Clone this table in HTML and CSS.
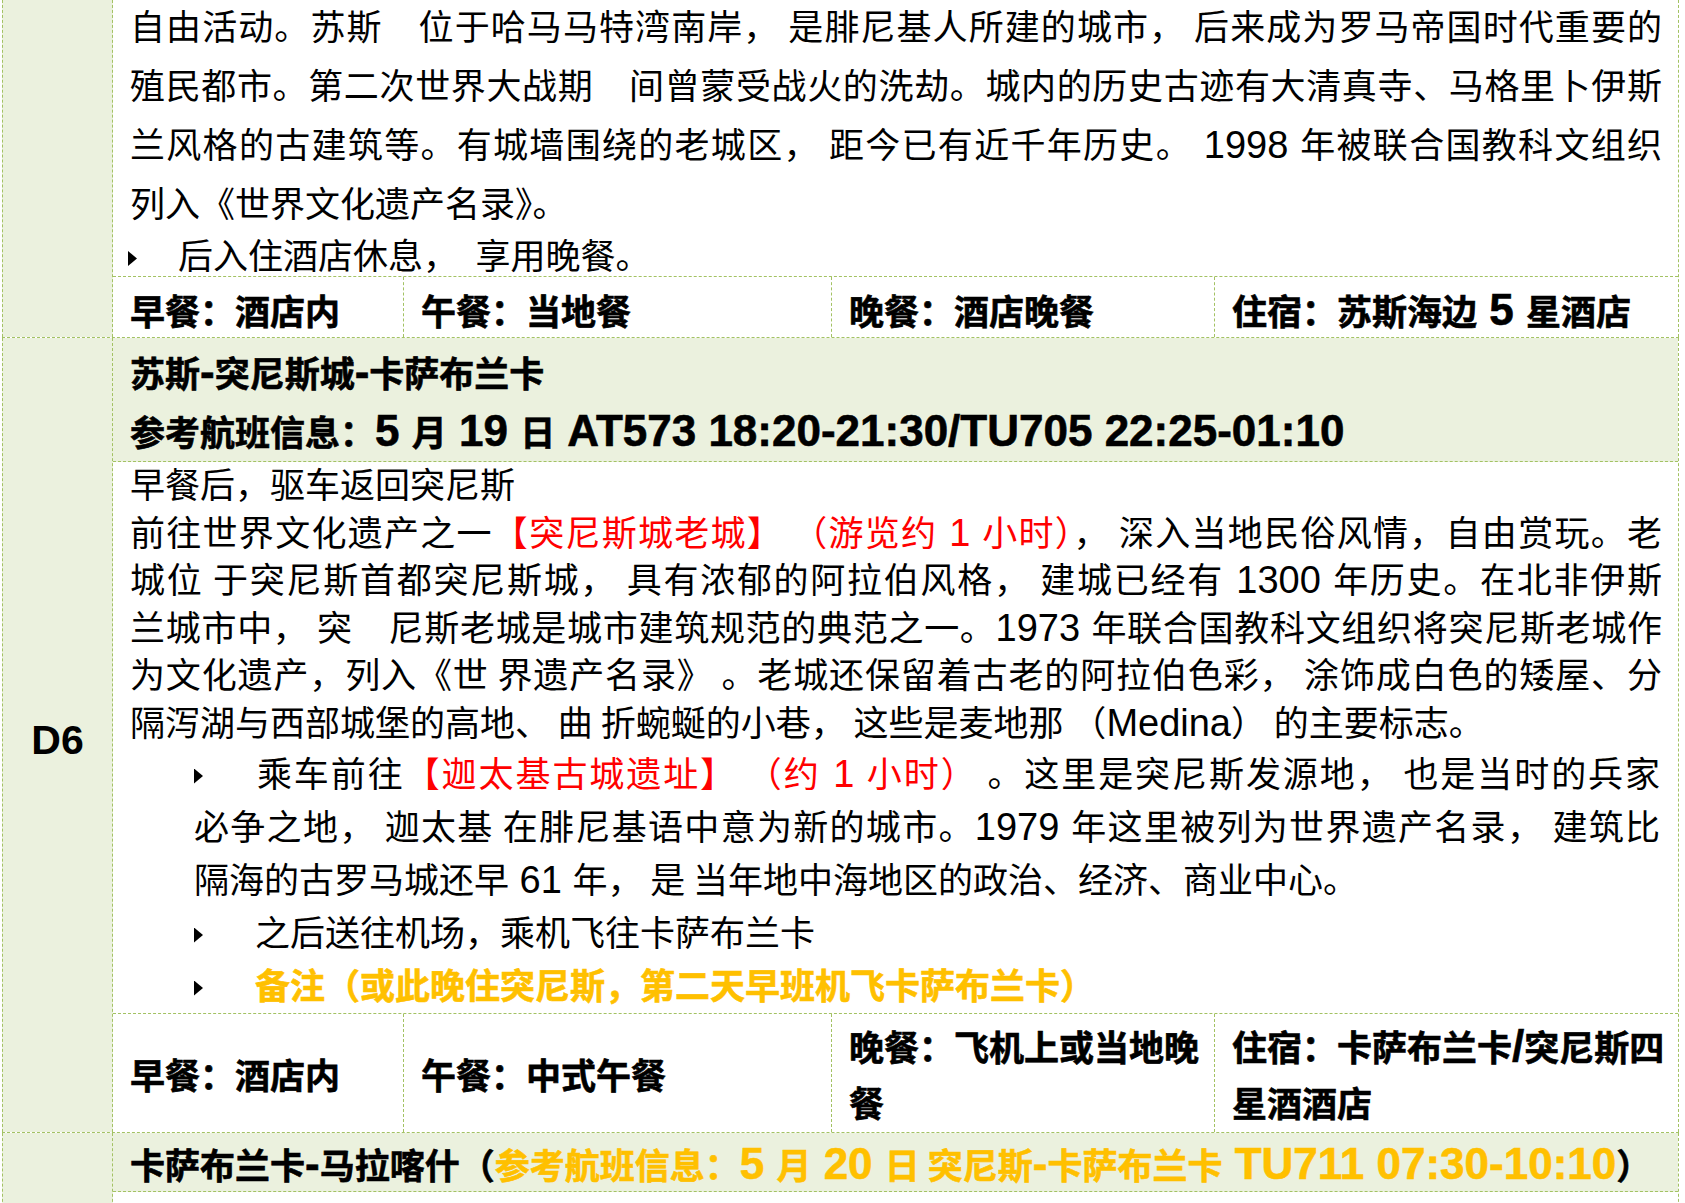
FILE: index.html
```html
<!DOCTYPE html>
<html lang="zh-CN">
<head>
<meta charset="utf-8">
<title>行程</title>
<link rel="stylesheet" href="styles.css">
</head>
<body>
<div class="sheet">
  <div class="row first">
    <div class="day"></div>
    <div class="content">
      <div class="para top">
        <span class="ln">自由活动。苏斯　位于哈马马特湾南岸， 是腓尼基人所建的城市， 后来成为罗马帝国时代重要的</span>
        <span class="ln">殖民都市。第二次世界大战期　间曾蒙受战火的洗劫。城内的历史古迹有大清真寺、马格里卜伊斯</span>
        <span class="ln">兰风格的古建筑等。有城墙围绕的老城区， 距今已有近千年历史。<span class="la"> 1998 </span>年被联合国教科文组织</span>
        <span class="ln end">列入《世界文化遗产名录》。</span>
      </div>
      <div class="bul top-bul"><span class="tri"></span>后入住酒店休息，&ensp;享用晚餐。</div>
      <div class="meals short">
        <div class="cell"><span>早餐：酒店内</span></div>
        <div class="cell"><span>午餐：当地餐</span></div>
        <div class="cell"><span>晚餐：酒店晚餐</span></div>
        <div class="cell"><span>住宿：苏斯海边<span class="la"> 5 </span>星酒店</span></div>
      </div>
    </div>
  </div>

  <div class="row">
    <div class="day"><span class="day-label">D6</span></div>
    <div class="content">
      <div class="head">
        <div>苏斯<span class="la">-</span>突尼斯城<span class="la">-</span>卡萨布兰卡</div>
        <div>参考航班信息：<span class="la">5 </span>月<span class="la"> 19 </span>日<span class="la"> AT573 18:20-21:30/TU705 22:25-01:10</span></div>
      </div>
      <div class="para body">
        <span class="ln end">早餐后，驱车返回突尼斯</span>
        <span class="ln">前往世界文化遗产之一<span class="red">【突尼斯城老城】 （游览约<span class="la"> 1 </span>小时）</span>， 深入当地民俗风情，自由赏玩。老</span>
        <span class="ln">城位 于突尼斯首都突尼斯城， 具有浓郁的阿拉伯风格， 建城已经有<span class="la"> 1300 </span>年历史。在北非伊斯</span>
        <span class="ln">兰城市中， 突　尼斯老城是城市建筑规范的典范之一。<span class="la">1973 </span>年联合国教科文组织将突尼斯老城作</span>
        <span class="ln">为文化遗产，列入《世 界遗产名录》 。老城还保留着古老的阿拉伯色彩， 涂饰成白色的矮屋、分</span>
        <span class="ln end">隔泻湖与西部城堡的高地、 曲 折蜿蜒的小巷， 这些是麦地那 （<span class="la">Medina</span>） 的主要标志。</span>
      </div>
      <div class="subs">
        <div class="sub">
          <span class="ln"><span class="tri"></span>乘车前往<span class="red">【迦太基古城遗址】 （约<span class="la"> 1 </span>小时）</span> 。这里是突尼斯发源地， 也是当时的兵家</span>
          <span class="ln">必争之地， 迦太基 在腓尼基语中意为新的城市。<span class="la">1979 </span>年这里被列为世界遗产名录， 建筑比</span>
          <span class="ln end">隔海的古罗马城还早<span class="la"> 61 </span>年， 是 当年地中海地区的政治、经济、商业中心。</span>
        </div>
        <div class="sub"><span class="tri"></span>之后送往机场，乘机飞往卡萨布兰卡</div>
        <div class="sub note"><span class="tri"></span>备注（或此晚住突尼斯，第二天早班机飞卡萨布兰卡）</div>
      </div>
      <div class="meals tall">
        <div class="cell"><span>早餐：酒店内</span></div>
        <div class="cell"><span>午餐：中式午餐</span></div>
        <div class="cell"><span>晚餐：飞机上或当地晚<br>餐</span></div>
        <div class="cell"><span>住宿：卡萨布兰卡<span class="la">/</span>突尼斯四<br>星酒酒店</span></div>
      </div>
    </div>
  </div>

  <div class="row">
    <div class="day"></div>
    <div class="content">
      <div class="head single">卡萨布兰卡<span class="la">-</span>马拉喀什（<span class="orange">参考航班信息：<span class="la">5 </span>月<span class="la"> 20 </span>日 突尼斯<span class="la">-</span>卡萨布兰卡<span class="la"> TU711 07:30-10:10</span></span>）</div>
      <div class="blank"></div>
    </div>
  </div>
</div>
</body>
</html>
```

FILE: styles.css
```css
html, body {
  margin: 0;
  padding: 0;
  background: #ffffff;
  overflow: hidden;
}

body {
  font-family: "Noto Sans CJK SC", "Noto Sans", sans-serif;
  font-size: 35px;
  color: #000000;
}

.sheet {
  margin: -5px 0 0 2px;
  width: 1677px;
}

.row {
  display: grid;
  grid-template-columns: 111px 1fr;
  border-top: 1px dashed #a3c263;
}

.row.first {
  border-top: none;
}

.day {
  background: #ebf1de;
  border-left: 1px dashed #a3c263;
  border-right: 1px dashed #a3c263;
  display: flex;
  align-items: center;
  justify-content: center;
}

.day-label {
  font-family: "Liberation Sans", Arial, sans-serif;
  font-weight: 700;
  font-size: 41px;
  margin-top: 12px;
}

.content {
  border-right: 1px dashed #a3c263;
  display: flex;
  flex-direction: column;
}

.la {
  font-family: "Liberation Sans", Arial, sans-serif;
  font-size: 38px;
  line-height: 1;
}

.para {
  padding: 0 16px 0 17px;
}

.ln {
  display: block;
  text-align: justify;
  text-align-last: justify;
}

.ln.end {
  text-align-last: left;
}

.para.top {
  line-height: 59px;
}

.bul {
  line-height: 45px;
  padding-left: 15px;
}

.tri {
  display: inline-block;
  width: 9px;
  height: 15px;
  background: #000000;
  clip-path: polygon(0 0, 100% 50%, 0 100%);
  vertical-align: 3px;
}

.top-bul .tri {
  margin-right: 41px;
}

.meals {
  display: grid;
  grid-template-columns: 290px 428px 383px 1fr;
  border-top: 1px dashed #a3c263;
  font-weight: 700;
  -webkit-text-stroke: 0.6px #000000;
}

.meals .la,
.head .la {
  font-size: 44px;
}

.cell {
  padding-left: 17px;
  padding-right: 2px;
  border-left: 1px dashed #a3c263;
  display: flex;
  align-items: center;
}

.cell:first-child {
  border-left: none;
}

.meals.short {
  height: 60px;
}

.meals.short .cell {
  padding-top: 8px;
  padding-bottom: 2px;
  line-height: 50px;
}

.meals.tall {
  height: 118px;
}

.meals.tall .cell {
  padding-top: 4px;
  padding-bottom: 2px;
  line-height: 56px;
}

.head {
  background: #ebf1de;
  font-weight: 700;
  -webkit-text-stroke: 0.6px #000000;
  line-height: 59px;
  padding: 4px 16px 1px 17px;
  border-bottom: 1px dashed #a3c263;
}

.head.single {
  line-height: 50px;
  padding-top: 6px;
  padding-bottom: 2px;
  white-space: nowrap;
}

.para.body {
  line-height: 47.6px;
  margin-top: -3px;
}

.subs {
  padding: 0 18px 3px 81px;
  line-height: 53px;
}

.sub .tri {
  margin-right: 52px;
}

.note {
  color: #ffc000;
  font-weight: 700;
  -webkit-text-stroke: 0.6px #ffc000;
}

.red {
  color: #ff0000;
}

.orange {
  color: #ffc000;
  -webkit-text-stroke: 0.6px #ffc000;
}

.blank {
  height: 20px;
}
```
